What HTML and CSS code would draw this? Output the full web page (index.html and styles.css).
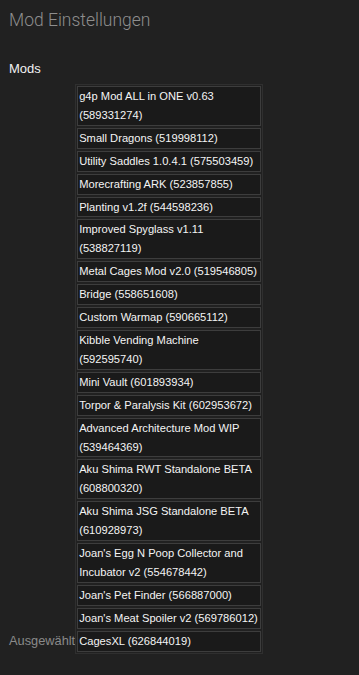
FILE: index.html
```html
<!DOCTYPE html>
<html lang="de">
<head>
    <meta charset="UTF-8">
    <meta name="viewport" content="width=device-width, initial-scale=1.0">
    <title>Mod Einstellungen</title>
    <link rel="stylesheet" href="styles.css">
</head>
<body>
    <h1 class="page-title">Mod Einstellungen</h1>
    <h2 class="section-title">Mods</h2>
    <div class="field">
        <span class="field-label">Ausgewählt</span><ul class="mod-list">
            <li class="mod">g4p Mod ALL in ONE v0.63 (589331274)</li>
            <li class="mod">Small Dragons (519998112)</li>
            <li class="mod">Utility Saddles 1.0.4.1 (575503459)</li>
            <li class="mod">Morecrafting ARK (523857855)</li>
            <li class="mod">Planting v1.2f (544598236)</li>
            <li class="mod">Improved Spyglass v1.11 (538827119)</li>
            <li class="mod">Metal Cages Mod v2.0 (519546805)</li>
            <li class="mod">Bridge (558651608)</li>
            <li class="mod">Custom Warmap (590665112)</li>
            <li class="mod">Kibble Vending Machine (592595740)</li>
            <li class="mod">Mini Vault (601893934)</li>
            <li class="mod">Torpor &amp; Paralysis Kit (602953672)</li>
            <li class="mod">Advanced Architecture Mod WIP (539464369)</li>
            <li class="mod">Aku Shima RWT Standalone BETA (608800320)</li>
            <li class="mod">Aku Shima JSG Standalone BETA (610928973)</li>
            <li class="mod">Joan's Egg N Poop Collector and Incubator v2 (554678442)</li>
            <li class="mod">Joan's Pet Finder (566887000)</li>
            <li class="mod">Joan's Meat Spoiler v2 (569786012)</li>
            <li class="mod">CagesXL (626844019)</li>
        </ul>
    </div>
</body>
</html>
```

FILE: styles.css
```css
body {
    font-family: 'Liberation Sans', Arial, sans-serif;
    background-color: #212121;
    color: #eeeeee;
    margin: 0;
    padding: 8px 9px;
}
.page-title {
    font-family: Roboto, 'Liberation Sans', sans-serif;
    font-weight: 300;
    font-size: 17.5px;
    line-height: 20px;
    color: #8e8e8e;
    margin: 2px 0 0;
}
.section-title {
    font-size: 13px;
    font-weight: normal;
    line-height: 15px;
    color: #f2f2f2;
    margin: 31px 0 8px;
}
.field {
    font-size: 13px;
}
.field-label {
    font-size: 12.8px;
    color: #8a8a8a;
}
.mod-list {
    display: inline-block;
    vertical-align: baseline;
    list-style: none;
    margin: 0;
    padding: 1px;
    width: 184px;
    border: 1px solid #2f2f2f;
}
.mod {
    font-size: 11.15px;
    line-height: 18.9px;
    padding: 0 0 0 1px;
    margin-bottom: 2px;
    color: #f4f4f4;
    background-color: #1a1a1a;
    border: 1px solid #3d3d3d;
}
.mod:last-child {
    margin-bottom: 0;
}
```
